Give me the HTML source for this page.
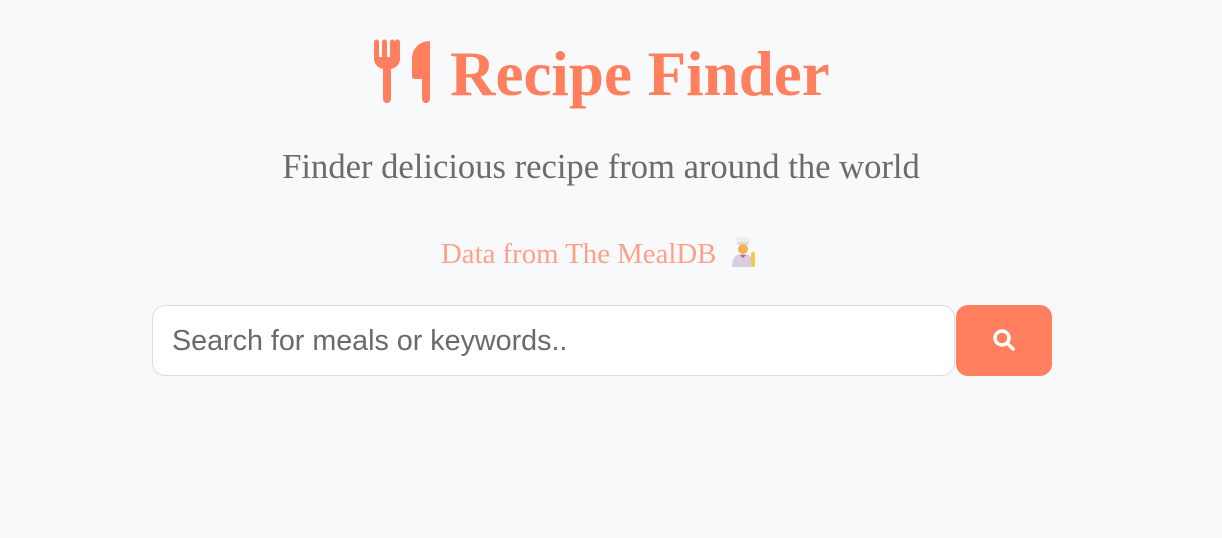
<!DOCTYPE html>
<html><head><meta charset="utf-8"><style>
html,body{margin:0;padding:0;background:#f8f9fa;width:1222px;height:538px;overflow:hidden}
.t{position:absolute;white-space:nowrap}
h1{position:absolute;left:450px;top:31px;margin:0;font:bold 63px/86px "Liberation Serif",serif;color:#ff7f5e}
.sub{left:0;width:1202px;text-align:center;top:145px;font:34.6px/44px "Liberation Serif",serif;color:#6b6b6b}
.data{left:441px;top:236px;font:28.8px/36px "Liberation Serif",serif;color:#ffa08a}
.inp{position:absolute;left:152px;top:305px;width:801px;height:69px;border:1px solid #ddd;border-radius:13px;background:#fff}
.inp span{position:absolute;left:19px;top:18px;font:28.7px/34px "Liberation Sans",sans-serif;color:#6a6a6a}
.btn{position:absolute;left:956px;top:305px;width:96px;height:71px;border-radius:12px;background:#ff7f5e}
</style></head><body>
<svg style="position:absolute;left:374px;top:39px" width="58" height="64" viewBox="0 0 58 64">
<g fill="#ff7f5e">
<path d="M0 3a2.5 2.5 0 0 1 5 0v15h3V3a2.5 2.5 0 0 1 5 0v15h3V3a2.5 2.5 0 0 1 5 0v15h0V3a2.5 2.5 0 0 1 5 0v17c0 5-4 9-9 10v30a4 4 0 0 1-8 0V30C4 29 0 25 0 20V3z"/>
<path d="M56 2v58a4 4 0 0 1-8 0V40h-7c-2 0-3-1-3-3V20C38 9 46 2 56 2z"/>
</g></svg>
<h1>Recipe Finder</h1>
<div class="t sub">Finder delicious recipe from around the world</div>
<div class="t data">Data from The MealDB</div>
<svg style="position:absolute;left:731px;top:237px" width="26" height="31" viewBox="0 0 26 31">
<rect x="5" y="0" width="14" height="6" rx="3" fill="#eee"/>
<rect x="6" y="5" width="12" height="3" fill="#ddd"/>
<circle cx="12" cy="12" r="5" fill="#f4b24e"/>
<path d="M1 30c0-9 3-13 11-13s11 4 11 13z" fill="#d9cde6"/>
<path d="M9 18l3 3 3-3z" fill="#e0507a"/>
<rect x="20" y="15" width="4" height="15" rx="2" fill="#f5c84a"/>
</svg>
<div class="inp"><span>Search for meals or keywords..</span></div>
<div class="btn"><svg style="position:absolute;left:36px;top:23px" width="26" height="26" viewBox="0 0 26 26"><circle cx="10" cy="10" r="7" fill="none" stroke="#fff" stroke-width="3.5"/><path d="M15 15l6 6" stroke="#fff" stroke-width="3.5" stroke-linecap="round"/></svg></div>
</body></html>
